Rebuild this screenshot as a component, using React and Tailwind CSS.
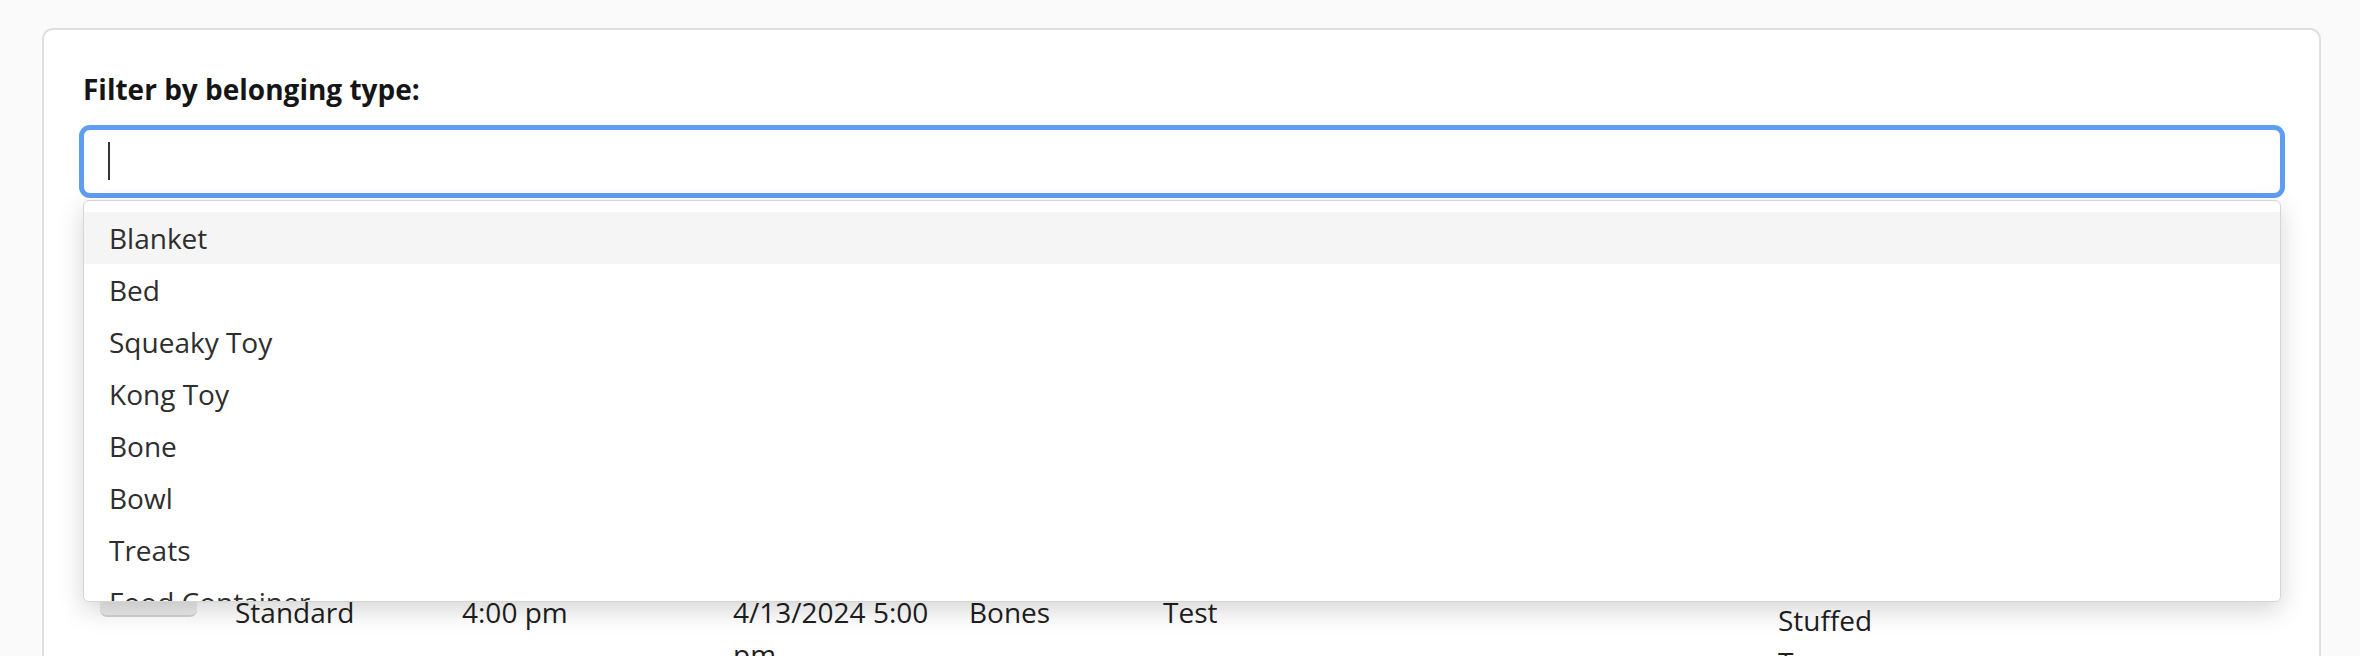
import { useState } from "react";

const belongingTypes = [
  "Blanket",
  "Bed",
  "Squeaky Toy",
  "Kong Toy",
  "Bone",
  "Bowl",
  "Treats",
  "Food Container",
  "Leash",
  "Collar",
];

export default function App() {
  const [query, setQuery] = useState("");
  const [active, setActive] = useState(0);

  const options = belongingTypes.filter((t) =>
    t.toLowerCase().includes(query.toLowerCase())
  );

  return (
    <div className="min-h-screen bg-[#fafafa] pt-[28px] pl-[42px] pr-[39px] font-['Open_Sans',sans-serif] text-[#222]">
      <div className="bg-white border-2 border-[#dfdfdf] rounded-[11px] pt-[38px] pl-[39px] pr-[38px] pb-10">
        {/* Filter */}
        <label className="block text-[28px] leading-[42px] font-bold text-[#151515]">
          Filter by belonging type:
        </label>
        <div className="relative mt-[19px]">
          <input
            value={query}
            onChange={(e) => setQuery(e.target.value)}
            className="block w-full h-[65px] px-[25px] text-[28px] bg-white border border-[#5f9df3] rounded-[7px] ring-4 ring-[#5f9df3] outline-none caret-transparent"
          />
          {/* caret */}
          <span className="pointer-events-none absolute left-[25px] top-[13px] h-[38px] w-[2px] bg-[#333]" />

          {/* Dropdown */}
          <ul className="absolute z-10 left-0 right-0 top-[calc(100%+6px)] max-h-[402px] overflow-hidden bg-white border border-[#d5d5d5] rounded-[6px] pt-[11px] shadow-[0_8px_26px_rgba(0,0,0,0.17)]">
            {options.map((opt, i) => (
              <li
                key={opt}
                onMouseEnter={() => setActive(i)}
                className={
                  "h-[52px] flex items-center px-[25px] text-[28px] text-[#2e2e2e] cursor-pointer " +
                  (i === active ? "bg-[#f5f5f5]" : "bg-white")
                }
              >
                {opt}
              </li>
            ))}
          </ul>
        </div>

        {/* Belongings table */}
        <table className="mt-[381px] table-fixed border-collapse text-[28px] leading-[42px] text-[#1f1f1f]">
          <colgroup>
            <col className="w-[136px]" />
            <col className="w-[227px]" />
            <col className="w-[271px]" />
            <col className="w-[236px]" />
            <col className="w-[194px]" />
            <col className="w-[615px]" />
            <col className="w-[152px]" />
            <col className="w-[366px]" />
          </colgroup>
          <tbody>
            <tr className="align-top">
              <td className="pl-[17px] pr-4 pt-[2px]">
                <button className="block w-[97px] h-[40px] rounded-[7px] bg-[#ebebeb] border-b-2 border-[#d3d3d3]" />
              </td>
              <td className="px-4 pt-4">Standard</td>
              <td className="px-4 pt-4">4:00 pm</td>
              <td className="px-4 pt-4">4/13/2024 5:00 pm</td>
              <td className="px-4 pt-4">Bones</td>
              <td className="px-4 pt-4">Test</td>
              <td className="px-4 pt-6">Stuffed Toy</td>
              <td className="px-4 pt-4"></td>
            </tr>
          </tbody>
        </table>
      </div>
    </div>
  );
}
